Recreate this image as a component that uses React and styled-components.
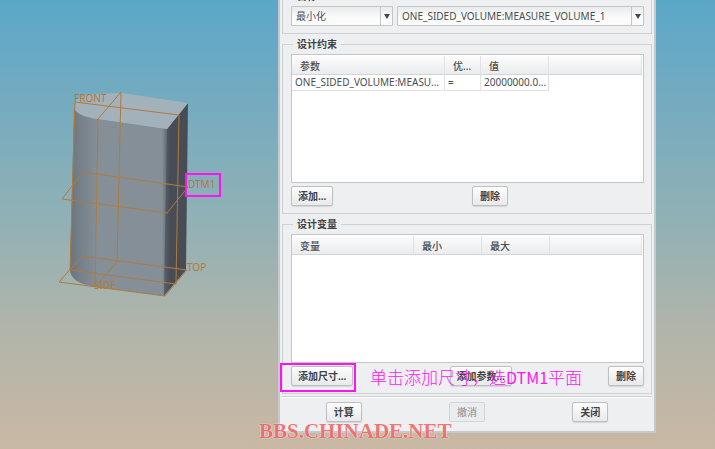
import React from 'react';
import styled, { createGlobalStyle } from 'styled-components';


const GlobalStyle = createGlobalStyle`
    :root {
        --line: #cdd1d3;
        --panel: #eeeff1;
        --text: #4a4d50;
        --strong: #404346;
        --mark: #ff14f0;
        --axis: #b07a3c;
    }

    * {
        box-sizing: border-box;
    }

    body {
        margin: 0;
        color: var(--text);
        font-family: "Noto Sans", "Noto Sans CJK SC", sans-serif;
        font-size: 10px;
        line-height: 16px;
    }
`

const App = () => {
    return (
        <Page>
            <GlobalStyle />
            <Stage>
                <Model />
            </Stage>
            <Dialog>
                <Group>
                    <legend>目标</legend>
                    <GoalRow>
                        <Dropdown label="目标类型" value="最小化" />
                        <Dropdown label="目标参数" value="ONE_SIDED_VOLUME:MEASURE_VOLUME_1" />
                    </GoalRow>
                </Group>

                <Group>
                    <legend>设计约束</legend>
                    <TableBox>
                        <DataTable
                            widths={[153, 36, 68]}
                            heads={['参数', '优...', '值']}
                            rows={[['ONE_SIDED_VOLUME:MEASU...', '=', '20000000.0...']]}
                        />
                    </TableBox>
                    <HalfRow>
                        <Button>添加...</Button>
                        <Button>删除</Button>
                    </HalfRow>
                </Group>

                <Group>
                    <legend>设计变量</legend>
                    <TableBox>
                        <DataTable widths={[122, 68, 68]} heads={['变量', '最小', '最大']} rows={[]} />
                    </TableBox>
                    <SpreadRow>
                        <Marked>
                            <Button $wide>添加尺寸...</Button>
                        </Marked>
                        <Button $wide>添加参数...</Button>
                        <Button>删除</Button>
                        <Note>单击添加尺寸，选<span>DTM1</span>平面</Note>
                    </SpreadRow>
                </Group>

                <Footer>
                    <Button>计算</Button>
                    <Button disabled>撤消</Button>
                    <Button>关闭</Button>
                </Footer>
                <Watermark>BBS.CHINADE.NET</Watermark>
            </Dialog>
        </Page>
    );
};

const Dropdown = ({ label, value }) => {
    return (
        <SelectBox>
            <select aria-label={label} defaultValue={value}>
                <option>{value}</option>
            </select>
        </SelectBox>
    );
};

const DataTable = ({ widths, heads, rows }) => {
    return (
        <Table>
            <colgroup>
                {widths.map((width, index) => <col key={index} width={width} />)}
                <col />
            </colgroup>
            <thead>
                <tr>
                    {heads.map(head => <th key={head}>{head}</th>)}
                    <th />
                </tr>
            </thead>
            <tbody>
                {rows.map(row => (
                    <tr key={row[0]}>
                        {row.map(cell => <td key={cell}>{cell}</td>)}
                    </tr>
                ))}
            </tbody>
        </Table>
    );
};

const Model = () => {
    return (
        <svg width="278" height="320" viewBox="0 0 278 320">
            <defs>
                <linearGradient id="front" x1="70" x2="168" y1="0" y2="0" gradientUnits="userSpaceOnUse">
                    <stop offset="0" stopColor="#6a747d" />
                    <stop offset="0.08" stopColor="#737e87" />
                    <stop offset="0.28" stopColor="#858f98" />
                    <stop offset="0.94" stopColor="#858f98" />
                    <stop offset="1" stopColor="#59616a" />
                </linearGradient>
                <linearGradient id="side" x1="164" x2="188" y1="0" y2="0" gradientUnits="userSpaceOnUse">
                    <stop offset="0" stopColor="#59616a" />
                    <stop offset="0.25" stopColor="#484d55" />
                    <stop offset="1" stopColor="#484d55" />
                </linearGradient>
            </defs>
            <path d="M74 108 Q78 117 98 119 L168 129 L165 296 L97 287 Q71 284 70 270 Z" fill="url(#front)" />
            <path d="M167 129 L188 103 L186 270 L164 296 Z" fill="url(#side)" />
            <path d="M75 101 Q82 94 97 94 L122 93 L188 103 L167 129 L98 119 Q79 116 75 110 Z" fill="#a3b1ba" />
            <g fill="none" stroke="var(--axis)" strokeWidth="1">
                <path d="M75 102 L179 115 L176 284 L70 270 Z" />
                <path d="M121 92 L98 119 L95 287 L117 262 Z" />
                <path d="M83 172 L188 187 L167 213 L62 199 Z" />
                <path d="M82 256 L187 270 L165 296 L59 282 Z" />
            </g>
            <g fill="var(--axis)">
                <text x="74" y="102">FRONT</text>
                <text x="188" y="188">DTM1</text>
                <text x="187" y="271">TOP</text>
                <text x="94" y="289">SIDE</text>
            </g>
            <rect x="186" y="174" width="34" height="22" fill="none" stroke="var(--mark)" strokeWidth="2" />
        </svg>
    );
};

const Page = styled.main`
    display: grid;
    grid-template-columns: 278fr 378fr 59fr;
    align-items: start;
    min-height: 100vh;
    overflow: hidden;
    background: linear-gradient(#5ba7c9 0%, #74abc0 22%, #92b1b5 50%, #b0b4aa 72%, #c9b8a3 100%);
`

const Stage = styled.section`
    svg {
        display: block;
    }
`

const Dialog = styled.section`
    position: relative;
    margin-top: -16px;
    padding: 2px 2px 0;
    border: 2px solid #c3cace;
    background: var(--panel);
`

const Group = styled.fieldset`
    min-width: 0;
    margin: 0 0 2px;
    padding: 2px 7px 7px 8px;
    border: 1px solid var(--line);

    legend {
        margin-left: 2px;
        padding: 0 4px;
        font-weight: 700;
        color: var(--strong);
    }
`

const GoalRow = styled.div`
    display: grid;
    grid-template-columns: 102fr 247fr;
    gap: 4px;
`

const SelectBox = styled.span`
    position: relative;
    display: flex;

    select {
        width: 100%;
        height: 20px;
        padding: 0 16px 0 4px;
        appearance: none;
        border: 1px solid #c2c6c9;
        border-radius: 1px;
        background: linear-gradient(#e9ebec, #fbfbfb 60%);
        color: var(--text);
        font: inherit;
    }

    &::before {
        content: "";
        position: absolute;
        inset: 1px 12px 1px auto;
        border-left: 1px solid #c2c6c9;
        pointer-events: none;
    }

    &::after {
        content: "";
        position: absolute;
        top: 8px;
        right: 3px;
        border: 3px solid transparent;
        border-top: 5px solid #44484b;
        border-bottom: 0;
        pointer-events: none;
    }
`

const TableBox = styled.div`
    height: 129px;
    padding: 1px 1px 0 0;
    border: 1px solid #c2c6c9;
    background: #fff;
`

const Table = styled.table`
    width: 100%;
    table-layout: fixed;
    border-collapse: separate;
    border-spacing: 0;

    th,
    td {
        overflow: hidden;
        padding: 0 0 0 3px;
        border-right: 1px solid #e0e2e4;
        border-bottom: 1px solid #e0e2e4;
        text-align: left;
        white-space: nowrap;
        line-height: 15px;
    }

    th {
        height: 19px;
        padding: 2px 0 0 8px;
        border-bottom-color: #d3d6d8;
        background: linear-gradient(#fcfcfc, #ebecee);
        font-weight: 500;
    }
`

const Button = styled.button`
    min-width: ${props => (props.$wide ? '62px' : '36px')};
    height: 20px;
    padding: 0 6px;
    border: 1px solid #bcc0c3;
    border-radius: 2px;
    background: linear-gradient(#fdfdfd, #e8e9eb);
    box-shadow: 0 1px 1px #d3d6d8;
    color: var(--strong);
    font: inherit;
    font-weight: 700;
    line-height: 16px;
    white-space: nowrap;

    &:disabled {
        border-color: #d3d6d8;
        background: #ebecee;
        box-shadow: none;
        color: #9a9da0;
        font-weight: 500;
    }
`

const HalfRow = styled.div`
    display: grid;
    grid-template-columns: 181fr 172fr;
    justify-items: start;
    margin-top: 3px;
`

const SpreadRow = styled.div`
    position: relative;
    display: flex;
    justify-content: space-between;
    margin-top: 3px;
`

const Marked = styled.span`
    position: relative;
    display: flex;

    &::after {
        content: "";
        position: absolute;
        inset: -3px -3px -6px -11px;
        border: 2px solid var(--mark);
        pointer-events: none;
    }
`

const Note = styled.span`
    position: absolute;
    top: 0;
    left: 79px;
    color: var(--mark);
    font-family: "Noto Sans CJK SC", sans-serif;
    font-size: 17px;
    font-weight: 300;
    line-height: 22px;
    white-space: nowrap;
    pointer-events: none;

    span {
        font-size: 16px;
        font-weight: 400;
    }
`

const Footer = styled.footer`
    display: grid;
    grid-template-columns: repeat(3, 1fr);
    justify-items: center;
    padding: 5px 0 9px;
    border-top: 1px solid var(--line);
    box-shadow: inset 0 1px #fff;
`

const Watermark = styled.span`
    position: absolute;
    bottom: -12px;
    left: -21px;
    color: #ee6a68;
    font: bold 21px/24px "Liberation Serif", serif;
    text-shadow: 0 0 1px #fff, 0 0 1px #fff;
    opacity: 0.9;
    white-space: nowrap;
    pointer-events: none;
`

export default App;
